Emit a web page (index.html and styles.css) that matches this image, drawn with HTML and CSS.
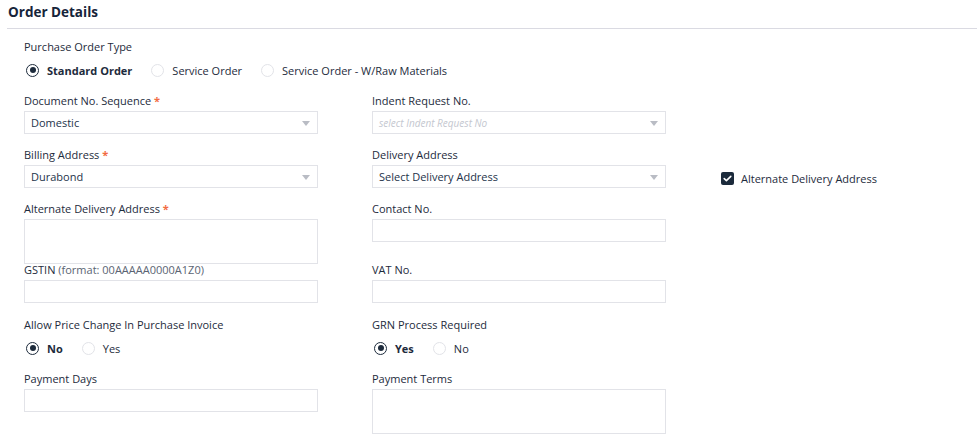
FILE: index.html
```html
<!DOCTYPE html>
<html>
<head>
<meta charset="utf-8">
<link rel="stylesheet" href="styles.css">
</head>
<body>
<div class="page">
  <div class="header"><h1 class="title">Order Details</h1></div>
  <div class="form">
    <div class="group">
      <div class="label">Purchase Order Type</div>
      <div class="radios">
        <label class="radio checked"><span class="dot"></span><span class="rtext">Standard Order</span></label>
        <label class="radio"><span class="dot"></span><span class="rtext">Service Order</span></label>
        <label class="radio"><span class="dot"></span><span class="rtext">Service Order - W/Raw Materials</span></label>
      </div>
    </div>

    <div class="row">
      <div class="field">
        <div class="label">Document No. Sequence <span class="req">*</span></div>
        <div class="select"><span class="val">Domestic</span><span class="caret"></span></div>
      </div>
      <div class="field">
        <div class="label">Indent Request No.</div>
        <div class="select"><span class="ph">select Indent Request No</span><span class="caret"></span></div>
      </div>
    </div>

    <div class="row">
      <div class="field">
        <div class="label">Billing Address <span class="req">*</span></div>
        <div class="select"><span class="val">Durabond</span><span class="caret"></span></div>
      </div>
      <div class="field">
        <div class="label">Delivery Address</div>
        <div class="select"><span class="val">Select Delivery Address</span><span class="caret"></span></div>
      </div>
      <div class="check-cell">
        <label class="check"><span class="box"><svg width="9" height="7" viewBox="0 0 9 7"><path d="M1.2 3.6 L3.4 5.6 L7.8 1.4" fill="none" stroke="#fff" stroke-width="1.6" stroke-linecap="round" stroke-linejoin="round"/></svg></span><span class="ctext">Alternate Delivery Address</span></label>
      </div>
    </div>

    <div class="row">
      <div class="field">
        <div class="label">Alternate Delivery Address <span class="req">*</span></div>
        <div class="textarea"></div>
      </div>
      <div class="field">
        <div class="label">Contact No.</div>
        <div class="input"></div>
      </div>
    </div>

    <div class="row row-flush">
      <div class="field">
        <div class="label">GSTIN <span class="hint">(format: 00AAAAA0000A1Z0)</span></div>
        <div class="input"></div>
      </div>
      <div class="field">
        <div class="label">VAT No.</div>
        <div class="input"></div>
      </div>
    </div>

    <div class="row row-radio">
      <div class="field">
        <div class="label">Allow Price Change In Purchase Invoice</div>
        <div class="radios">
          <label class="radio checked"><span class="dot"></span><span class="rtext">No</span></label>
          <label class="radio"><span class="dot"></span><span class="rtext">Yes</span></label>
        </div>
      </div>
      <div class="field">
        <div class="label">GRN Process Required</div>
        <div class="radios">
          <label class="radio checked"><span class="dot"></span><span class="rtext">Yes</span></label>
          <label class="radio"><span class="dot"></span><span class="rtext">No</span></label>
        </div>
      </div>
    </div>

    <div class="row row-after-radio">
      <div class="field">
        <div class="label">Payment Days</div>
        <div class="input"></div>
      </div>
      <div class="field">
        <div class="label">Payment Terms</div>
        <div class="textarea"></div>
      </div>
    </div>
  </div>
</div>
</body>
</html>
```

FILE: styles.css
```css
* { box-sizing: border-box; }
html, body { margin: 0; padding: 0; background: #ffffff; }
body {
  font-family: "Open Sans", "Noto Sans", sans-serif;
  color: #1d2b3c;
  font-size: 11px;
}
.page { width: 977px; height: 440px; overflow: hidden; }
.header {
  margin-left: 7px;
  padding-left: 1px;
  border-bottom: 1px solid #dadae2;
  height: 29px;
}
.title {
  margin: 0;
  font-size: 13.5px;
  font-weight: 700;
  line-height: 24px;
  color: #16243a;
}
.form { padding-left: 24px; padding-top: 10px; }
.label {
  line-height: 16px;
  font-size: 11px;
  color: #1d2b3c;
  white-space: nowrap;
}
.req { color: #f26b43; font-weight: 700; }
.hint { color: #5a6472; }
.radios {
  display: flex;
  align-items: center;
  height: 20px;
  margin-top: 5px;
}
.radio {
  display: flex;
  align-items: center;
  margin-right: 17px;
}
.dot {
  width: 13px;
  height: 13px;
  border-radius: 50%;
  border: 1px solid #e2e3e8;
  margin-left: 2px;
  margin-right: 8px;
  display: flex;
  align-items: center;
  justify-content: center;
}
.radio.checked .dot { border: 1.5px solid #1d2b3c; }
.radio.checked .dot::after {
  content: "";
  width: 6px;
  height: 6px;
  border-radius: 50%;
  background: #1d2b3c;
}
.rtext { font-size: 11px; color: #1d2b3c; }
.radio.checked .rtext { font-weight: 700; }
.row {
  display: grid;
  grid-template-columns: 294px 294px auto;
  column-gap: 54px;
  margin-top: 13px;
  align-items: start;
}
.row-flush { margin-top: -2px; }
.row-radio { margin-top: 14px; }
.row-after-radio { margin-top: 13px; }
.select, .input, .textarea {
  margin-top: 2px;
  border: 1px solid #e2e3e8;
  background: #fff;
  width: 294px;
}
.select, .input { height: 23px; }
.select {
  display: flex;
  align-items: center;
  justify-content: space-between;
  padding: 0 7px 0 6px;
}
.val { font-size: 11px; color: #24334a; }
.ph { font-size: 10px; font-style: italic; color: #c4c7cf; }
.caret {
  width: 0;
  height: 0;
  border-left: 4px solid transparent;
  border-right: 4px solid transparent;
  border-top: 5px solid #b9bcc4;
  margin-top: 2px;
}
.textarea { height: 45px; }
.check-cell { padding-top: 24px; padding-left: 1px; }
.check { display: flex; align-items: center; }
.box {
  width: 13px;
  height: 13px;
  border-radius: 2px;
  background: #1b2a3b;
  display: flex;
  align-items: center;
  justify-content: center;
  margin-right: 7px;
}
.ctext { font-size: 11px; color: #1d2b3c; }
```
